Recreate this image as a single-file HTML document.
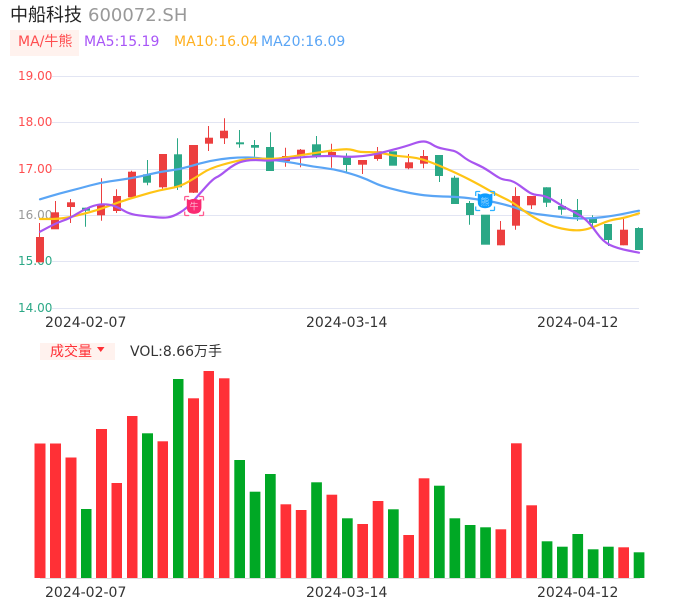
<!DOCTYPE html>
<html lang="zh">
<head>
<meta charset="utf-8">
<style>
html,body{margin:0;padding:0;background:#fff;width:686px;height:606px;overflow:hidden}
svg{display:block}
text{font-family:"DejaVu Sans","WenQuanYi Zen Hei","Noto Sans CJK SC",sans-serif}
.ax{font-size:12px}
.d{font-size:14px;fill:#333}
.r{fill:#ec3f3f}
.g{fill:#2ba886}
.wr{stroke:#ec3f3f;stroke-width:1}
.wg{stroke:#2ba886;stroke-width:1}
.vr{fill:#ff3036}
.vg{fill:#00a825}
</style>
</head>
<body>
<svg width="686" height="606" viewBox="0 0 686 606" xmlns="http://www.w3.org/2000/svg">
<text x="10" y="21" font-size="18" fill="#222">中船科技</text>
<text x="88" y="21" font-size="18" fill="#999">600072.SH</text>
<rect x="10" y="30" width="69" height="26" fill="#fff2ee"/>
<text x="18" y="46" font-size="14" fill="#ff4d4f">MA/牛熊</text>
<text x="84" y="46" font-size="14" fill="#a855f7">MA5:15.19</text>
<text x="174" y="46" font-size="14" fill="#ffb020">MA10:16.04</text>
<text x="261" y="46" font-size="14" fill="#5aa5f5">MA20:16.09</text>

<g stroke="#e2e5f3" stroke-width="1">
<line x1="52" x2="639" y1="76.5" y2="76.5"/>
<line x1="52" x2="639" y1="122.5" y2="122.5"/>
<line x1="52" x2="639" y1="169.5" y2="169.5"/>
<line x1="52" x2="639" y1="215.5" y2="215.5"/>
<line x1="52" x2="639" y1="261.5" y2="261.5"/>
<line x1="52" x2="639" y1="308.5" y2="308.5"/>
</g>
<text class="ax" x="18" y="80" fill="#ff4d4f">19.00</text>
<text class="ax" x="18" y="126" fill="#ff4d4f">18.00</text>
<text class="ax" x="18" y="173" fill="#ff4d4f">17.00</text>
<text class="ax" x="18" y="219" fill="#999">16.00</text>
<text class="ax" x="18" y="265" fill="#2ba886">15.00</text>
<text class="ax" x="18" y="312" fill="#2ba886">14.00</text>

<!-- candles -->
<g>
<line class="wr" x1="39.5" x2="39.5" y1="223" y2="262"/><rect class="r" x="36" y="237" width="8" height="25.3"/>
<line class="wr" x1="55.5" x2="55.5" y1="201" y2="229"/><rect class="r" x="51" y="212.3" width="8" height="17"/>
<line class="wr" x1="70.5" x2="70.5" y1="199" y2="223"/><rect class="r" x="67" y="202.3" width="8" height="4.7"/>
<line class="wg" x1="85.5" x2="85.5" y1="207.7" y2="226.7"/><rect class="g" x="82" y="207.7" width="8" height="3"/>
<line class="wr" x1="101.5" x2="101.5" y1="178.3" y2="220.7"/><rect class="r" x="97" y="204" width="8" height="11.3"/>
<line class="wr" x1="116.5" x2="116.5" y1="189.3" y2="213"/><rect class="r" x="113" y="196" width="8" height="15"/>
<line class="wr" x1="131.5" x2="131.5" y1="170.7" y2="198"/><rect class="r" x="128" y="171.7" width="8" height="25.6"/>
<line class="wg" x1="147.5" x2="147.5" y1="160" y2="185.3"/><rect class="g" x="143" y="174.3" width="8" height="8.4"/>
<line class="wr" x1="162.5" x2="162.5" y1="154" y2="188.7"/><rect class="r" x="159" y="154" width="8" height="33.3"/>
<line class="wg" x1="177.5" x2="177.5" y1="138.3" y2="190"/><rect class="g" x="174" y="154.3" width="8" height="33"/>
<line class="wr" x1="193.5" x2="193.5" y1="145" y2="193"/><rect class="r" x="189" y="145" width="9" height="47.7"/>
<line class="wr" x1="208.5" x2="208.5" y1="126" y2="151"/><rect class="r" x="205" y="137.7" width="8" height="6"/>
<line class="wr" x1="224.5" x2="224.5" y1="118.3" y2="144"/><rect class="r" x="220" y="130.7" width="8" height="7.6"/>
<line class="wg" x1="239.5" x2="239.5" y1="130" y2="147.7"/><rect class="g" x="236" y="142.3" width="8" height="2"/>
<line class="wg" x1="254.5" x2="254.5" y1="140" y2="156.7"/><rect class="g" x="251" y="145" width="8" height="2.7"/>
<line class="wg" x1="270.5" x2="270.5" y1="132.3" y2="171"/><rect class="g" x="266" y="147" width="8" height="24"/>
<line class="wr" x1="285.5" x2="285.5" y1="147.7" y2="166.7"/><rect class="r" x="282" y="156" width="8" height="5"/>
<line class="wr" x1="300.5" x2="300.5" y1="149" y2="167.3"/><rect class="r" x="297" y="149.7" width="8" height="6"/>
<line class="wg" x1="316.5" x2="316.5" y1="136" y2="158.3"/><rect class="g" x="312" y="144.3" width="9" height="12.4"/>
<line class="wr" x1="331.5" x2="331.5" y1="143.7" y2="167.7"/><rect class="r" x="328" y="152" width="8" height="3.7"/>
<line class="wg" x1="346.5" x2="346.5" y1="153.3" y2="171.7"/><rect class="g" x="343" y="156" width="8" height="9"/>
<line class="wr" x1="362.5" x2="362.5" y1="160" y2="174"/><rect class="r" x="358" y="160" width="9" height="4.7"/>
<line class="wr" x1="377.5" x2="377.5" y1="147" y2="160.7"/><rect class="r" x="374" y="151.3" width="8" height="7.7"/>
<rect class="g" x="389" y="151.3" width="8" height="14.4"/>
<line class="wr" x1="408.5" x2="408.5" y1="154" y2="169.3"/><rect class="r" x="405" y="162.3" width="8" height="6"/>
<line class="wr" x1="423.5" x2="423.5" y1="150" y2="168.3"/><rect class="r" x="420" y="156" width="8" height="7.7"/>
<line class="wg" x1="439.5" x2="439.5" y1="155" y2="182"/><rect class="g" x="435" y="155" width="8" height="21"/>
<line class="wg" x1="454.5" x2="454.5" y1="175.7" y2="204"/><rect class="g" x="451" y="177.7" width="8" height="26.3"/>
<line class="wg" x1="469.5" x2="469.5" y1="201" y2="224.7"/><rect class="g" x="466" y="203" width="8" height="12"/>
<rect class="g" x="481" y="214.7" width="9" height="30"/>
<line class="wr" x1="500.5" x2="500.5" y1="221" y2="245.3"/><rect class="r" x="497" y="229.7" width="8" height="15.6"/>
<line class="wr" x1="515.5" x2="515.5" y1="187.3" y2="229.7"/><rect class="r" x="512" y="196" width="8" height="29.7"/>
<line class="wr" x1="531.5" x2="531.5" y1="196" y2="209"/><rect class="r" x="527" y="196" width="9" height="9.3"/>
<line class="wg" x1="546.5" x2="546.5" y1="187.3" y2="207"/><rect class="g" x="543" y="187.3" width="8" height="15.4"/>
<line class="wg" x1="561.5" x2="561.5" y1="199" y2="214.7"/><rect class="g" x="558" y="206" width="8" height="3.7"/>
<line class="wg" x1="577.5" x2="577.5" y1="199" y2="221"/><rect class="g" x="573" y="210" width="9" height="7"/>
<line class="wg" x1="592.5" x2="592.5" y1="215.3" y2="226.7"/><rect class="g" x="589" y="217.7" width="8" height="5.3"/>
<line class="wg" x1="608.5" x2="608.5" y1="224" y2="246"/><rect class="g" x="604" y="224" width="8" height="16"/>
<line class="wr" x1="623.5" x2="623.5" y1="219" y2="245.3"/><rect class="r" x="620" y="229.7" width="8" height="15.6"/>
<line class="wg" x1="638.5" x2="638.5" y1="227.3" y2="250"/><rect class="g" x="635" y="228" width="8" height="22"/>
</g>

<!-- MA lines -->
<g fill="none" stroke-width="2.2" stroke-linejoin="round" stroke-linecap="round">
<path stroke="#5aa5f5" d="M40,199.3 L50,196.3 Q60,193.3 70,190.8 Q80,188.3 90,185.5 Q100,182.7 110,181.3 Q120,180 130,178.3 Q140,176.7 150,174.2 Q160,171.7 170,170.5 Q180,169.3 190,166.3 Q200,163.3 210,161.1 Q220,159 230,158.1 Q240,157.3 248.5,157.5 Q257,157.7 265,158.8 Q273,160 283,161.3 Q293,162.7 303,164.7 Q313,166.7 323,167.8 Q333,169 343,171.6 Q353,174.3 360,176.8 Q367,179.3 373.5,182.5 Q380,185.7 390,188.3 Q400,191 410,193 Q420,195 428.5,195.6 Q437,196.3 448.5,196.6 Q460,197 468.5,198.1 Q477,199.3 485,200.5 Q493,201.7 503,204.2 Q513,206.7 521.5,210 Q530,213.3 541.5,214.6 Q553,216 563,217.3 Q573,218.7 583,218.5 Q593,218.3 603,217.1 Q613,216 626,213.3 L639,210.7"/>
<path stroke="#ffc414" d="M40,219 L48.5,219 Q57,219 63.5,218.1 Q70,217.3 78.5,215.1 Q87,213 93.5,211.1 Q100,209.3 110,205.5 Q120,201.7 130,198.7 Q140,195.7 150,192.8 Q160,190 170,188.3 Q180,186.7 188.5,181.7 Q197,176.7 203.5,172.5 Q210,168.3 221.5,165 Q233,161.7 240,160.3 Q247,159 255,158.8 Q263,158.7 270,158.8 Q277,159 285,157.6 Q293,156.3 303,154.8 Q313,153.3 323,151.8 Q333,150.3 340,149.6 Q347,149 350,149.5 Q353,150 356.5,151.1 Q360,152.3 368.5,152.1 Q377,152 385,153.8 Q393,155.7 401.5,156.3 Q410,157 416.5,158.1 Q423,159.3 430,162 Q437,164.7 447,169 Q457,173.3 468.5,179.1 Q480,185 488.5,190 Q497,195 505,198.6 Q513,202.3 520,207.8 Q527,213.3 533.5,217.1 Q540,221 546.5,223.8 Q553,226.7 561.5,228.5 Q570,230.3 576.5,230.3 Q583,230.3 588,228.8 Q593,227.3 601.5,223.6 Q610,220 616.5,219.1 Q623,218.3 631,215.8 L639,213.3"/>
<path stroke="#a855f0" d="M40,231.7 L48.5,227.2 Q57,222.7 63.5,220.5 Q70,218.3 76.5,214.1 Q83,210 90,207.1 Q97,204.3 103.5,204.3 Q110,204.3 115,206.3 Q120,208.3 125,211.3 Q130,214.3 138.5,215.3 Q147,216.3 155,217.1 Q163,218 168,217.3 Q173,216.7 180,212.5 Q187,208.3 193.5,200.8 Q200,193.3 206.5,186.1 Q213,179 216.5,177.3 Q220,175.7 225,171.5 Q230,167.3 235,164.5 Q240,161.7 246.5,160.7 Q253,159.7 261.5,160.3 Q270,161 278.5,159.8 Q287,158.7 297,157.7 Q307,156.7 318.5,156.2 Q330,155.7 338.5,156.3 Q347,157 355,156.6 Q363,156.3 371.5,154.8 Q380,153.3 393.5,149.6 Q407,146 413.5,143.6 Q420,141.3 424,141.5 Q428,141.7 432.5,144.7 Q437,147.7 443.5,148.8 Q450,150 453.5,150.8 Q457,151.7 462.5,156.2 Q468,160.7 475.5,163.8 Q483,167 490,171.8 Q497,176.7 500,178.2 Q503,179.7 508,180.2 Q513,180.7 520,185.8 Q527,191 530,192.8 Q533,194.7 540,195.3 Q547,196 555,201.3 Q563,206.7 571.5,210.8 Q580,215 585,219.1 Q590,223.3 596.5,232.5 Q603,241.7 610,245 Q617,248.3 628,250.5 L639,252.7"/>
</g>

<!-- bull icon -->
<g>
<path d="M184.7 200.500v-3q0-1 1-1h3.500M199 196.500h3.500q1 0 1 1v3M203.500 211.500v3q0 1-1 1h-3.500M189.200 215.500h-3.500q-1 0-1-1v-3" fill="none" stroke="#ff5a90" stroke-width="1.300"/>
<path d="M186.800 198.800q2.200 1.700 4 .6q3.300-1 6.600 0q1.800 1.100 4-.6v8.600q0 4-3 5.600q-4.300 1.800-8.600 0q-3-1.600-3-5.600z" fill="#fa2a72"/>
<text x="194" y="209.500" font-size="9" fill="#ffb4cf" text-anchor="middle">牛</text>
</g>
<!-- bear icon -->
<g>
<path d="M475.700 196v-3.500q0-1 1-1h3.500M490 191.500h3.500q1 0 1 1v3.500M494.500 206.500v3q0 1-1 1h-3.500M480.200 210.500h-3.500q-1 0-1-1v-3" fill="none" stroke="#2db2ff" stroke-width="1.300"/>
<path d="M477.800 193.300q2.200 1.700 4 .6q3.300-1 6.600 0q1.800 1.100 4-.6v8.800q0 3.800-3 5.300q-4.300 1.800-8.600 0q-3-1.500-3-5.300z" fill="#0f9dff"/>
<text x="485" y="205" font-size="9" fill="#8fd2ff" text-anchor="middle">熊</text>
</g>

<text class="d" x="45" y="327">2024-02-07</text>
<text class="d" x="306" y="327">2024-03-14</text>
<text class="d" x="537" y="327">2024-04-12</text>

<rect x="40" y="343" width="75" height="17" fill="#fff2ee"/>
<text x="50" y="356" font-size="14" fill="#ff3036">成交量</text>
<path d="M97 347h7.500l-3.750 5z" fill="#ff3036"/>
<text x="130" y="356" font-size="14" fill="#333">VOL:8.66万手</text>

<line x1="40" x2="640" y1="578.500" y2="578.500" stroke="#ddd"/>
<g>
<rect class="vr" x="34.500" y="443.500" width="11" height="134.500"/>
<rect class="vr" x="50" y="443.500" width="11" height="134.500"/>
<rect class="vr" x="65.500" y="457.500" width="11" height="120.500"/>
<rect class="vg" x="81" y="509" width="10.500" height="69"/>
<rect class="vr" x="96" y="429" width="11" height="149"/>
<rect class="vr" x="111.500" y="483" width="10.500" height="95"/>
<rect class="vr" x="127" y="416" width="10.500" height="162"/>
<rect class="vg" x="142" y="433.300" width="11" height="144.700"/>
<rect class="vr" x="157.500" y="441.300" width="10.500" height="136.700"/>
<rect class="vg" x="173" y="379" width="10.500" height="199"/>
<rect class="vr" x="188" y="398.300" width="11" height="179.700"/>
<rect class="vr" x="203.500" y="371" width="10.500" height="207"/>
<rect class="vr" x="219" y="378.300" width="10.500" height="199.700"/>
<rect class="vg" x="234.300" y="460" width="10.700" height="118"/>
<rect class="vg" x="249.700" y="491.700" width="10.700" height="86.300"/>
<rect class="vg" x="265" y="474" width="10.700" height="104"/>
<rect class="vr" x="280.500" y="504.300" width="10.700" height="73.700"/>
<rect class="vr" x="295.800" y="510" width="10.700" height="68"/>
<rect class="vg" x="311.200" y="482.300" width="10.700" height="95.700"/>
<rect class="vr" x="326.500" y="494.700" width="10.700" height="83.300"/>
<rect class="vg" x="342" y="518.300" width="10.700" height="59.700"/>
<rect class="vr" x="357.300" y="524" width="10.700" height="54"/>
<rect class="vr" x="372.700" y="501" width="10.700" height="77"/>
<rect class="vg" x="388" y="509.300" width="10.700" height="68.700"/>
<rect class="vr" x="403.300" y="535" width="10.700" height="43"/>
<rect class="vr" x="418.700" y="478.300" width="10.700" height="99.700"/>
<rect class="vg" x="434" y="485.700" width="10.700" height="92.300"/>
<rect class="vg" x="449.500" y="518.300" width="10.700" height="59.700"/>
<rect class="vg" x="464.800" y="525" width="10.700" height="53"/>
<rect class="vg" x="480.200" y="527.300" width="10.700" height="50.700"/>
<rect class="vr" x="495.500" y="529.300" width="10.700" height="48.700"/>
<rect class="vr" x="511" y="443.300" width="10.700" height="134.700"/>
<rect class="vr" x="526.300" y="505.300" width="10.700" height="72.700"/>
<rect class="vg" x="541.700" y="541.300" width="10.700" height="36.700"/>
<rect class="vg" x="557" y="546.700" width="10.700" height="31.300"/>
<rect class="vg" x="572.400" y="534" width="10.700" height="44"/>
<rect class="vg" x="587.800" y="549.300" width="10.700" height="28.700"/>
<rect class="vg" x="603" y="546.700" width="10.700" height="31.300"/>
<rect class="vr" x="618.300" y="547.300" width="10.700" height="30.700"/>
<rect class="vg" x="633.700" y="552.300" width="10.700" height="25.700"/>
</g>

<text class="d" x="45" y="597">2024-02-07</text>
<text class="d" x="306" y="597">2024-03-14</text>
<text class="d" x="537" y="597">2024-04-12</text>
</svg>
</body>
</html>
